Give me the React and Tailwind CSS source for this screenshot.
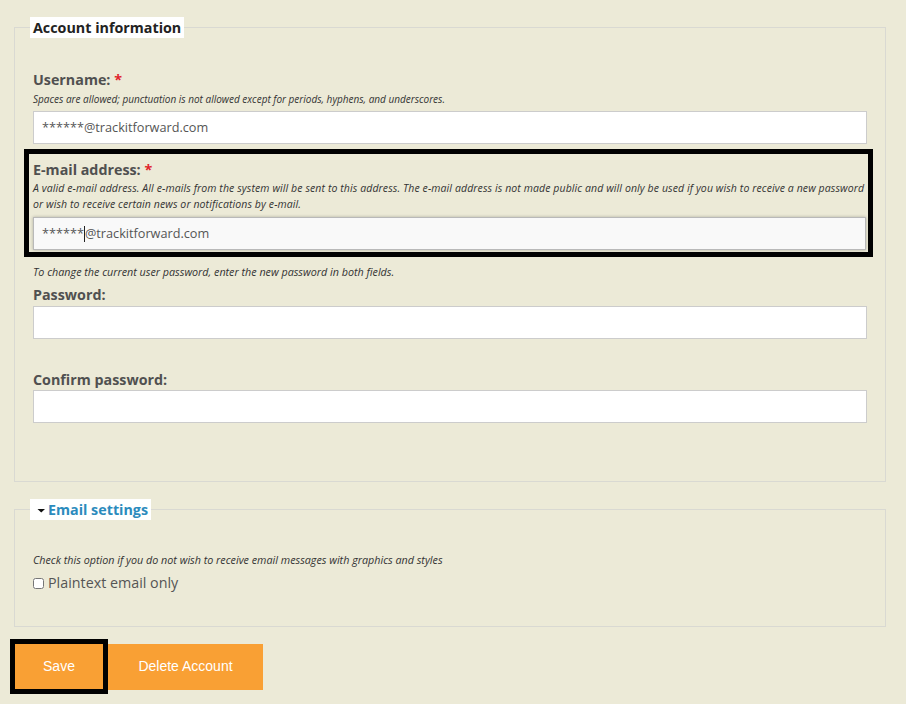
import React from "react";

const font = { fontFamily: '"Open Sans", "Noto Sans", sans-serif' };

function Label({ children, className = "" }) {
  return (
    <div className={"text-[14.3px] leading-[20px] font-bold text-[#505050] " + className}>
      {children}
    </div>
  );
}

function Desc({ children, className = "" }) {
  return (
    <div className={"leading-[16px] italic text-[#333] " + className}>
      {children}
    </div>
  );
}

function Field({ value, className = "", children }) {
  return (
    <div
      className={
        "h-[33px] border border-[#cccccc] bg-white flex items-center pl-[8px] text-[12.7px] text-[#555] " +
        className
      }
    >
      {children ?? value}
    </div>
  );
}

export default function App() {
  return (
    <div className="min-h-[704px] w-[906px] bg-[#ecead7] pt-[17px]" style={font}>
      <fieldset className="ml-[14px] w-[872px] border border-[#d9d9d2] pl-[18px] pr-[18px] pt-[32px] pb-[58px] m-0">
        <legend className="bg-white ml-[-3px] px-[3px] text-[14.3px] leading-[21px] font-bold text-[#222]">
          Account information
        </legend>

        <Label>
          Username: <span className="text-[#e0242b]">*</span>
        </Label>
        <Desc className="mt-[1px] text-[10px]">
          Spaces are allowed; punctuation is not allowed except for periods, hyphens, and underscores.
        </Desc>
        <Field className="mt-[4px]" value="******@trackitforward.com" />

        <div className="mt-[5px] ml-[-9px] mr-[-6px] border-[5px] border-black pl-[4px] pr-[1px] pt-[6px] pb-[2px]">
          <Label>
            E-mail address: <span className="text-[#e0242b]">*</span>
          </Label>
          <Desc className="text-[10.5px] tracking-[0.1px]">
            A valid e-mail address. All e-mails from the system will be sent to this address. The e-mail address is not made public and will only be used if you wish to receive a new password or wish to receive certain news or notifications by e-mail.
          </Desc>
          <div className="mt-[5px] mr-[1px] h-[33px] border border-[#b9b9b9] bg-[#f9f9f9] shadow-[0_0_3px_rgba(0,0,0,0.25)] flex items-center pl-[8px] text-[12.7px] text-[#555]">
            <span>******</span>
            <span className="inline-block w-[1px] h-[16px] bg-[#222]"></span>
            <span>@trackitforward.com</span>
          </div>
        </div>

        <Desc className="mt-[7px] text-[10.75px]">
          To change the current user password, enter the new password in both fields.
        </Desc>
        <Label className="mt-[5px]">Password:</Label>
        <Field className="mt-[1px]" />

        <Label className="mt-[31px]">Confirm password:</Label>
        <Field />
      </fieldset>

      <fieldset className="mt-[17px] ml-[14px] w-[872px] border border-[#d9d9d2] pl-[18px] pr-[18px] pt-[32px] pb-[33px] m-0">
        <legend className="bg-white ml-[-3px] px-[3px] text-[14.3px] leading-[21px] font-bold text-[#2b8bbd] flex items-center">
          <svg width="11" height="10" viewBox="0 0 11 10" className="ml-[3px] mr-[1px]">
            <path d="M1.5 4 L9 4 L5.25 7.5 Z" fill="#111" />
          </svg>
          Email settings
        </legend>
        <Desc className="text-[10.75px]">
          Check this option if you do not wish to receive email messages with graphics and styles
        </Desc>
        <div className="mt-[5px] flex items-center h-[20px] text-[14.3px] text-[#555]">
          <input type="checkbox" className="w-[11px] h-[11px] m-0 mr-[4px]" />
          <span>Plaintext email only</span>
        </div>
      </fieldset>

      <div className="mt-[12px] ml-[10px] flex items-center">
        <button
          className="w-[98px] h-[55px] border-[5px] border-black bg-[#f9a034] text-white text-[14px]"
          style={{ fontFamily: '"Liberation Sans", Arial, sans-serif' }}
        >
          Save
        </button>
        <button
          className="w-[155px] h-[46px] bg-[#f9a034] text-white text-[14px]"
          style={{ fontFamily: '"Liberation Sans", Arial, sans-serif' }}
        >
          Delete Account
        </button>
      </div>
    </div>
  );
}
